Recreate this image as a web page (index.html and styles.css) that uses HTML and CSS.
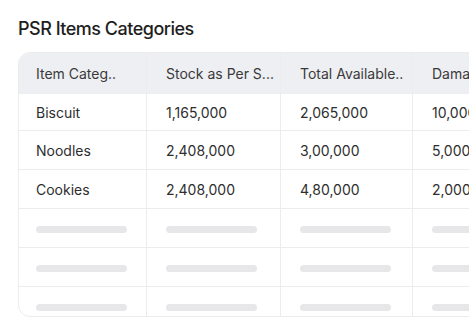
FILE: index.html
```html
<!DOCTYPE html>
<html lang="en">
<head>
<meta charset="utf-8">
<title>PSR Items Categories</title>
<link rel="stylesheet" href="styles.css">
</head>
<body>
<main class="page">
  <h1 class="title">PSR Items Categories</h1>
  <div class="table-wrap">
    <div class="row head">
      <div class="cell c1">Item Categ..</div>
      <div class="cell c2">Stock as Per S...</div>
      <div class="cell c3">Total Available..</div>
      <div class="cell c4">Damaged Stock</div>
    </div>
    <div class="row first">
      <div class="cell c1">Biscuit</div>
      <div class="cell c2">1,165,000</div>
      <div class="cell c3">2,065,000</div>
      <div class="cell c4">10,000</div>
    </div>
    <div class="row">
      <div class="cell c1">Noodles</div>
      <div class="cell c2">2,408,000</div>
      <div class="cell c3">3,00,000</div>
      <div class="cell c4">5,000</div>
    </div>
    <div class="row">
      <div class="cell c1">Cookies</div>
      <div class="cell c2">2,408,000</div>
      <div class="cell c3">4,80,000</div>
      <div class="cell c4">2,000</div>
    </div>
    <div class="row">
      <div class="cell c1"><span class="skel"></span></div>
      <div class="cell c2"><span class="skel"></span></div>
      <div class="cell c3"><span class="skel"></span></div>
      <div class="cell c4"><span class="skel"></span></div>
    </div>
    <div class="row">
      <div class="cell c1"><span class="skel"></span></div>
      <div class="cell c2"><span class="skel"></span></div>
      <div class="cell c3"><span class="skel"></span></div>
      <div class="cell c4"><span class="skel"></span></div>
    </div>
    <div class="row">
      <div class="cell c1"><span class="skel"></span></div>
      <div class="cell c2"><span class="skel"></span></div>
      <div class="cell c3"><span class="skel"></span></div>
      <div class="cell c4"><span class="skel"></span></div>
    </div>
  </div>
</main>
</body>
</html>
```
FILE: styles.css
```css
html, body {
  margin: 0;
  padding: 0;
  background: #ffffff;
  overflow: hidden;
}
body {
  font-family: Inter, "Noto Sans", "Liberation Sans", sans-serif;
  color: #2b2b2b;
}
.page {
  padding: 18px 0 0 18px;
}
.title {
  margin: 0 0 12px 0;
  font-size: 18px;
  line-height: 22px;
  font-weight: 500;
  color: #1e1e1e;
  letter-spacing: -0.5px;
}
.table-wrap {
  width: 560px;
  height: 265px;
  box-sizing: border-box;
  border: 1px solid #ececed;
  border-radius: 12px;
  overflow: hidden;
}
.row {
  display: flex;
  height: 39px;
  box-sizing: border-box;
  border-bottom: 1px solid #ececed;
  font-size: 14px;
  color: #2e2e2e;
}
.row.head {
  height: 41px;
  border-bottom: none;
  background: #eeeff2;
  color: #3a3a3a;
}
.row.first {
  height: 37px;
}
.cell {
  flex: none;
  box-sizing: border-box;
  display: flex;
  align-items: center;
  padding: 0 19px;
  border-right: 1px solid #ececed;
  white-space: nowrap;
  overflow: hidden;
}
.c1 { width: 128px; padding-left: 17px; }
.c2 { width: 134px; }
.c3 { width: 132px; }
.c4 { width: 170px; border-right: none; }
.skel {
  display: block;
  width: 91px;
  height: 7px;
  margin-top: 2px;
  border-radius: 4px;
  background: #e7e7e9;
}
```
